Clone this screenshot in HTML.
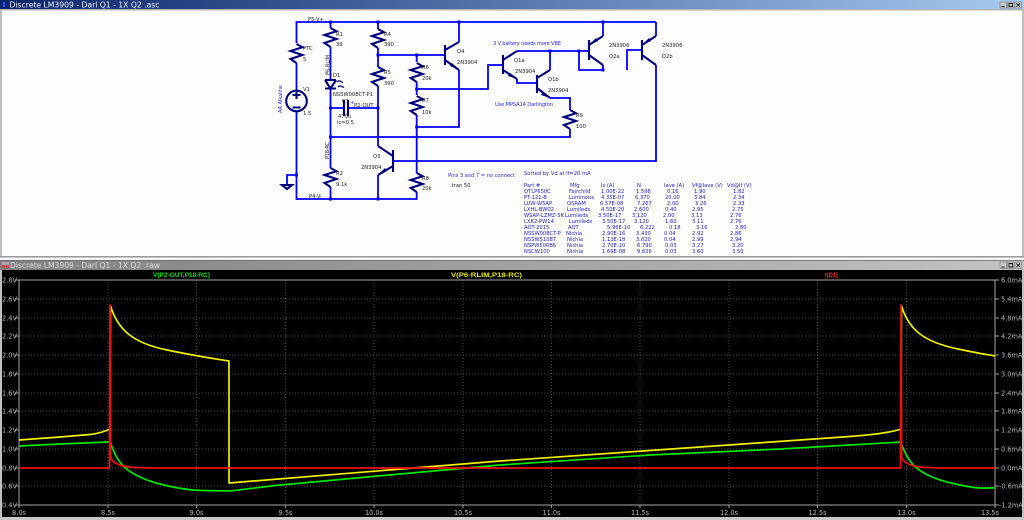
<!DOCTYPE html>
<html><head><meta charset="utf-8"><title>LTspice</title>
<style>
html,body{margin:0;padding:0;width:1024px;height:520px;overflow:hidden;background:#c8c8c8}
svg{display:block;position:absolute;left:0;top:0;filter:blur(0.35px)}
text{font-family:"DejaVu Sans","Liberation Sans",sans-serif}
.l{font-size:5.2px;fill:#222}
.b{font-size:5.2px;fill:#2c2cf0}
.t{font-size:5.2px;fill:#1c1cc8}
.y{font-size:6.6px;fill:#b8b8b8}
.x{font-size:6.6px;fill:#b8b8b8}
.w{fill:none;stroke:#0000ff;stroke-width:1.8}
.c{fill:none;stroke:#00007f;stroke-width:2.1}
.g{stroke:#666;stroke-width:.7;stroke-dasharray:1 2}
.k{stroke:#a0a0a0;stroke-width:1}
</style></head><body>
<svg width="1024" height="520" viewBox="0 0 1024 520" xmlns="http://www.w3.org/2000/svg">
<defs>
<linearGradient id="a" x1="0" x2="1" y1="0" y2="0"><stop offset="0" stop-color="#0a246a"/><stop offset="1" stop-color="#a6caf0"/></linearGradient>
<linearGradient id="i" x1="0" x2="1" y1="0" y2="0"><stop offset="0" stop-color="#808080"/><stop offset="1" stop-color="#c4c4c4"/></linearGradient>
<path id="r" d="M0 0L6 3.2L-6 7L6 11L-6 15L0 19" class="c"/>
</defs>

<!-- Schematic window -->
<rect x="0" y="0" width="1024" height="9" fill="url(#a)"/>
<rect x="0" y="9" width="1024" height="1.5" fill="#b4b4b4"/>
<rect x="2" y="10.5" width="1020" height="245.5" fill="#fdfdfd"/>
<rect x="0" y="256" width="1024" height="1.5" fill="#999"/>
<rect x="0" y="257.5" width="1024" height="2.5" fill="#f4f4f4"/>
<text x="9.5" y="7.3" font-size="7.6" fill="#eef2ff" textLength="150" lengthAdjust="spacingAndGlyphs">Discrete LM3909 - Darl Q1 - 1X Q2 .asc</text>
<rect x="3" y="2" width="2" height="5" fill="#3050ff"/>
<g fill="#c8c8c8" stroke="#666" stroke-width=".5">
<rect x="1000" y="2" width="6.5" height="6"/><rect x="1007.5" y="2" width="6.5" height="6"/><rect x="1015" y="2" width="6.5" height="6"/>
</g>
<path d="M1001.5 6.5h3M1009 3.5h3.5v3h-3.5zM1016.5 3.5l3.5 3M1020 3.5l-3.5 3" stroke="#111" stroke-width=".9" fill="none"/>

<!-- Wires -->
<g class="w">
<path d="M296.5 43V22H656"/>
<path d="M296.5 63V90M296.5 112V199H416.7V192"/>
<path d="M296.5 175H287V184"/>
<path d="M330.5 22V28M330.5 47V80M330.5 89V168M330.5 187V199"/>
<path d="M330.5 108H343M347 108H378"/>
<path d="M378 22V29M378 48V67M378 86V146M378 175V199"/>
<path d="M378 55H445"/>
<path d="M416.7 55V62M416.7 82V95M416.7 115V173"/>
<path d="M416.7 89H488V65H503"/>
<path d="M416.7 127H459V70"/>
<path d="M459 42V22"/>
<path d="M330.5 137H570V129"/>
<path d="M393 161H656V65"/>
<path d="M517 51H588"/>
<path d="M517 79V83H537"/>
<path d="M550 70V51"/>
<path d="M550 98H570V110"/>
<path d="M579 51V70H603"/>
<path d="M603 65V70"/>
<path d="M627 70V50H642"/>
<path d="M603 36V22"/>
<path d="M656 36V22"/>
</g>
<g fill="#0000ff">
<rect x="329" y="20.5" width="3" height="3"/><rect x="376.5" y="20.5" width="3" height="3"/><rect x="457.5" y="20.5" width="3" height="3"/><rect x="601.5" y="20.5" width="3" height="3"/>
<rect x="376.5" y="53.5" width="3" height="3"/><rect x="415.2" y="53.5" width="3" height="3"/><rect x="415.2" y="87.5" width="3" height="3"/><rect x="415.2" y="125.5" width="3" height="3"/>
<rect x="329" y="106.5" width="3" height="3"/><rect x="376.5" y="106.5" width="3" height="3"/><rect x="329" y="135.5" width="3" height="3"/>
<rect x="548.5" y="49.5" width="3" height="3"/><rect x="577.5" y="49.5" width="3" height="3"/><rect x="601.5" y="68.5" width="3" height="3"/>
<rect x="295" y="173.5" width="3" height="3"/><rect x="329" y="197.5" width="3" height="3"/><rect x="376.5" y="197.5" width="3" height="3"/>
</g>

<!-- Resistors -->
<use href="#r" x="296.5" y="44"/>
<use href="#r" x="330.5" y="28"/>
<use href="#r" x="378" y="29"/>
<use href="#r" x="378" y="67"/>
<use href="#r" x="416.7" y="63"/>
<use href="#r" x="416.7" y="96"/>
<use href="#r" x="330.5" y="168"/>
<use href="#r" x="416.7" y="173"/>
<use href="#r" x="570" y="110"/>

<!-- Components -->
<g class="c">
<circle cx="296.5" cy="101" r="10.3"/>
<path d="M292.5 95h8M296.5 91v8M292.5 107.5h8"/>
<path d="M325 80h11M325 80l5.5 8.5L336 80M325 88.5h11"/>
<path d="M337 82c3-3 4 1 6 0M338 87c3-3 4 1 6 0" stroke-width="1.3"/>
<path d="M344 100v16M348 100v16"/>
<path d="M282 185h10l-5 4z"/>
<!-- Q4 -->
<path d="M445 45v20M445 50l14-8M445 60l14 10"/>
<!-- Q3 -->
<path d="M393 150v22M393 156l-15-10M393 166l-15 9"/>
<!-- Q1a -->
<path d="M503 55v19M503 60l14-9M503 70l14 9"/>
<!-- Q1b -->
<path d="M537 75v18M537 78l13-8M537 88l13 10"/>
<!-- Q2a -->
<path d="M589 40v20M589 45l14-9M589 55l14 10"/>
<!-- Q2b -->
<path d="M642 40v20M642 45l14-9M642 55l14 10"/>
</g>
<g fill="#00007f">
<path d="M459 70l-7-7-2 3z"/><path d="M378 175l7-7 2 3z"/><path d="M517 79l-7-6-2 3z"/><path d="M550 98l-7-6-2 3z"/>
<path d="M589 45l7-7 2 3z"/><path d="M642 45l7-7 2 3z"/>
</g>

<!-- Labels -->
<g class="l">
<text x="308" y="21">P5-V+</text><text x="303" y="50">PTC</text><text x="303" y="61">5</text>
<text x="336" y="36">R1</text><text x="336" y="46">39</text>
<text x="384" y="36">R4</text><text x="384" y="46">390</text>
<text x="384" y="74">R5</text><text x="384" y="85">390</text>
<text x="422" y="69">R6</text><text x="422" y="80">20k</text>
<text x="422" y="102">R7</text><text x="422" y="114">10k</text>
<text x="457" y="53">Q4</text><text x="457" y="64">2N3904</text>
<text x="333" y="77">D1</text><text x="333" y="96">NSSW008CT-P1</text>
<text x="342" y="103">C1</text><text x="354" y="107">P2-OUT</text>
<text x="338" y="118">470u</text><text x="337" y="124">ic=0.5</text>
<text x="303" y="91">V1</text><text x="303" y="115">1.5</text>
<text x="336" y="175">R2</text><text x="336" y="186">9.1k</text>
<text x="422" y="180">R8</text><text x="422" y="190">20k</text>
<text x="373" y="158">Q3</text><text x="361" y="169">2N3904</text>
<text x="309" y="198">P4-V-</text><text x="450" y="187">.tran 50</text>
<text x="514" y="62">Q1a</text><text x="515" y="73">2N3904</text>
<text x="548" y="81">Q1b</text><text x="548" y="92">2N3904</text>
<text x="576" y="117">R9</text><text x="576" y="128">100</text>
<text x="609" y="47">2N3906</text><text x="609" y="58">Q2a</text>
<text x="662" y="47">2N3906</text><text x="662" y="58">Q2b</text>
<text transform="translate(329.5 75) rotate(-90)" textLength="20">P6-RLIM</text>
<text transform="translate(329 159) rotate(-90)" textLength="17">P18-RC</text>
</g>
<g class="b">
<text x="350" y="104">+</text>
<text transform="translate(282 113) rotate(-90)" textLength="28">AA Alkaline</text>
<text x="448" y="177" textLength="67">Pins 3 and 7 = no connect</text>
<text x="493" y="45" textLength="68">3 V battery needs more VBE</text>
<text x="495" y="106" textLength="58">Use MPSA14 Darlington</text>
</g>

<!-- Table -->
<g class="t">
<text x="524" y="175">Sorted by Vd at If=20 mA</text>
<text x="524" y="187">Part #</text><text x="570" y="187">Mfg</text><text x="601" y="187">Is (A)</text><text x="637" y="187">N</text><text x="664" y="187">Iave (A)</text><text x="692" y="187">Vf@Iave (V)</text><text x="727" y="187">Vd@If (V)</text>
<text x="524" y="193">QTLP650C</text><text x="569" y="193">Fairchild</text><text x="601" y="193">1.00E-22</text><text x="636" y="193">1.598</text><text x="667" y="193">0.16</text><text x="694" y="193">1.90</text><text x="733" y="193">1.82</text>
<text x="524" y="199">PT-121-B</text><text x="569" y="199">Luminous</text><text x="601" y="199">4.35E-07</text><text x="635" y="199">6.370</text><text x="665" y="199">20.00</text><text x="694" y="199">3.84</text><text x="733" y="199">2.34</text>
<text x="524" y="205">LUW-W5AP</text><text x="567" y="205">OSRAM</text><text x="600" y="205">6.57E-08</text><text x="637" y="205">7.267</text><text x="667" y="205">2.00</text><text x="695" y="205">3.26</text><text x="733" y="205">2.33</text>
<text x="524" y="211">LXHL-BW02</text><text x="567" y="211">Lumileds</text><text x="601" y="211">4.50E-20</text><text x="634" y="211">2.600</text><text x="665" y="211">0.40</text><text x="692" y="211">2.95</text><text x="732" y="211">2.75</text>
<text x="524" y="217">WSAP-LZMZ-5K</text><text x="565" y="217">Lumileds</text><text x="598" y="217">3.50E-17</text><text x="632" y="217">3.120</text><text x="663" y="217">2.00</text><text x="691" y="217">3.13</text><text x="730" y="217">2.76</text>
<text x="524" y="223">LXK2-PW14</text><text x="569" y="223">Lumileds</text><text x="602" y="223">3.50E-17</text><text x="634" y="223">3.120</text><text x="665" y="223">1.60</text><text x="692" y="223">3.11</text><text x="730" y="223">2.76</text>
<text x="524" y="229">AOT-2015</text><text x="568" y="229">AOT</text><text x="607" y="229">5.96E-10</text><text x="640" y="229">6.222</text><text x="669" y="229">0.18</text><text x="696" y="229">3.16</text><text x="735" y="229">2.80</text>
<text x="524" y="235">NSSW008CT-P</text><text x="566" y="235">Nichia</text><text x="602" y="235">2.90E-16</text><text x="636" y="235">3.430</text><text x="664" y="235">0.04</text><text x="692" y="235">2.92</text><text x="730" y="235">2.86</text>
<text x="524" y="241">NSSW5108T</text><text x="567" y="241">Nichia</text><text x="602" y="241">1.13E-18</text><text x="636" y="241">3.020</text><text x="664" y="241">0.04</text><text x="692" y="241">2.99</text><text x="730" y="241">2.94</text>
<text x="524" y="247">NSPW500BS</text><text x="567" y="247">Nichia</text><text x="602" y="247">2.70E-10</text><text x="637" y="247">6.790</text><text x="665" y="247">0.03</text><text x="692" y="247">3.27</text><text x="732" y="247">3.20</text>
<text x="524" y="253">NSCW100</text><text x="567" y="253">Nichia</text><text x="602" y="253">1.69E-08</text><text x="637" y="253">9.626</text><text x="665" y="253">0.03</text><text x="692" y="253">3.60</text><text x="732" y="253">3.50</text>
</g>

<!-- Waveform window -->
<rect x="0" y="260" width="1024" height="10" fill="url(#i)"/>
<rect x="0" y="260" width="1024" height=".7" fill="#666"/>
<rect x="2" y="262" width="7" height="6" fill="#b0a0b0"/>
<rect x="2" y="265" width="7" height="3" fill="#c05050"/>
<text x="10" y="268" font-size="7.6" fill="#dcdcdc" textLength="150" lengthAdjust="spacingAndGlyphs">Discrete LM3909 - Darl Q1 - 1X Q2 .raw</text>
<g fill="#c8c8c8" stroke="#666" stroke-width=".5">
<rect x="1000" y="262" width="6.5" height="6.5"/><rect x="1007.5" y="262" width="6.5" height="6.5"/><rect x="1015" y="262" width="6.5" height="6.5"/>
</g>
<path d="M1001.5 267h3M1009 263.5h3.5v3.5h-3.5zM1016.5 263.5l3.5 3.5M1020 263.5l-3.5 3.5" stroke="#111" stroke-width=".9" fill="none"/>
<rect x="2" y="270" width="1020" height="247" fill="#000"/>

<!-- Grid -->
<g class="g">
<path d="M19 299H995M19 318H995M19 336H995M19 355H995M19 374H995M19 393H995M19 411H995M19 430H995M19 449H995M19 468H995M19 486H995"/>
<path d="M108 280V505M196.500 280V505M285.500 280V505M374 280V505M463 280V505M551.500 280V505M640 280V505M729 280V505M817.500 280V505M906.500 280V505"/>
</g>
<rect x="19" y="280" width="976" height="225" fill="none" stroke="#8c8c8c" stroke-width="1.2"/>
<g class="k">
<path d="M15 280h4M15 299h4M15 318h4M15 336h4M15 355h4M15 374h4M15 393h4M15 411h4M15 430h4M15 449h4M15 468h4M15 486h4M15 505h4"/>
<path d="M995 280h4M995 299h4M995 318h4M995 336h4M995 355h4M995 374h4M995 393h4M995 411h4M995 430h4M995 449h4M995 468h4M995 486h4M995 505h4"/>
<path d="M19 505v3M108 505v3M196.500 505v3M285.500 505v3M374 505v3M463 505v3M551.500 505v3M640 505v3M729 505v3M817.500 505v3M906.500 505v3M995 505v3"/>
</g>
<g class="y">
<text x="2" y="282.500">2.8V</text><text x="2" y="301.500">2.6V</text><text x="2" y="320.500">2.4V</text><text x="2" y="338.500">2.2V</text><text x="2" y="357.500">2.0V</text><text x="2" y="376.500">1.8V</text><text x="2" y="395.500">1.6V</text><text x="2" y="413.500">1.4V</text><text x="2" y="432.500">1.2V</text><text x="2" y="451.500">1.0V</text><text x="2" y="470.500">0.8V</text><text x="2" y="488.500">0.6V</text><text x="2" y="507.500">0.4V</text>
<text x="1001" y="282.500">6.0mA</text><text x="1001" y="301.500">5.4mA</text><text x="1001" y="320.500">4.8mA</text><text x="1001" y="338.500">4.2mA</text><text x="1001" y="357.500">3.6mA</text><text x="1001" y="376.500">3.0mA</text><text x="1001" y="395.500">2.4mA</text><text x="1001" y="413.500">1.8mA</text><text x="1001" y="432.500">1.2mA</text><text x="1001" y="451.500">0.6mA</text><text x="1001" y="470.500">0.0mA</text><text x="999" y="488.500">-0.6mA</text><text x="999" y="507.500">-1.2mA</text>
</g>
<g class="x" text-anchor="middle">
<text x="19" y="515">8.0s</text><text x="108" y="515">8.5s</text><text x="196.500" y="515">9.0s</text><text x="285.500" y="515">9.5s</text><text x="374" y="515">10.0s</text><text x="463" y="515">10.5s</text><text x="551.500" y="515">11.0s</text><text x="640" y="515">11.5s</text><text x="729" y="515">12.0s</text><text x="817.500" y="515">12.5s</text><text x="906.500" y="515">13.0s</text><text x="990" y="515">13.5s</text>
</g>
<text x="153" y="277" font-size="6.2" font-weight="bold" fill="#00e000" textLength="57" lengthAdjust="spacingAndGlyphs" style='font-family:"Liberation Sans",sans-serif'>V(P2-OUT,P18-RC)</text>
<text x="451" y="277" font-size="6.2" font-weight="bold" fill="#e8e800" textLength="71" lengthAdjust="spacingAndGlyphs" style='font-family:"Liberation Sans",sans-serif'>V(P6-RLIM,P18-RC)</text>
<text x="825" y="277" font-size="6.2" font-weight="bold" fill="#ff2020" textLength="13" lengthAdjust="spacingAndGlyphs" style='font-family:"Liberation Sans",sans-serif'>I(D1)</text>

<!-- Traces -->
<path fill="none" stroke="#00e800" stroke-width="1.7" stroke-linejoin="round" d="M19 446L60 444L108 442L110.500 442C116 462 126 475 160 484S210 490 229 491C248 489 268 486 286 484.500L400 474L500 465L650 455L780 449L850 445L901 442C907 462 917 475 951 483S985 487 995 488"/>
<path fill="none" stroke="#f0f000" stroke-width="1.7" stroke-linejoin="round" d="M19 440L60 437L90 434.500C98 433.500 104 432 110 429L110.500 306C118 330 133 343 167 350S210 358 229 361L229 483L500 461L700 447L850 436.500C870 435 890 433 901 429L901.500 306C909 330 924 342 958 349S985 354 995 356"/>
<path fill="none" stroke="#f01010" stroke-width="1.7" stroke-linejoin="round" d="M19 468H109.500L110 305L110.700 458C113 463 120 467 137 467.500L150 468H900.500L901 305L901.700 458C904 463 911 467 928 467.500L940 468H995"/>

<rect x="0" y="517" width="1024" height="3" fill="#c8c8c8"/>
<rect x="0" y="10" width="2" height="246" fill="#c0c0c0"/>
<rect x="1022" y="10" width="2" height="246" fill="#c0c0c0"/>
<rect x="0" y="270" width="2" height="250" fill="#c0c0c0"/>
<rect x="1022" y="270" width="2" height="250" fill="#c0c0c0"/>
</svg>
</body></html>
